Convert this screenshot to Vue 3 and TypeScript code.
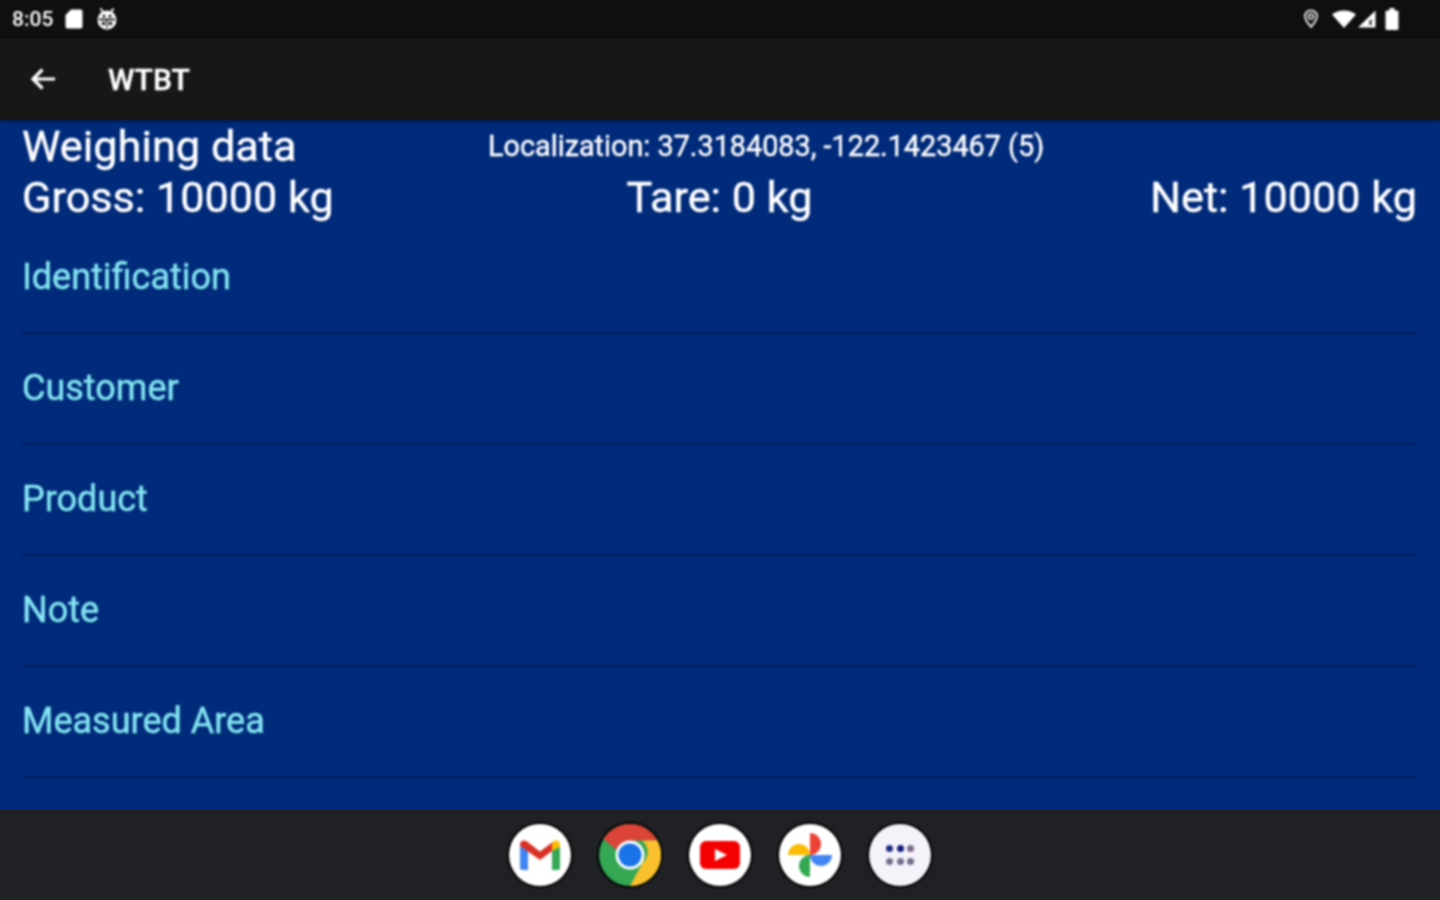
<template>
  <div class="screen">
    <!-- status bar -->
    <div class="status-bar">
      <div class="status-left soft">
        <span class="clock">8:05</span>
        <svg width="18" height="20" viewBox="0 0 18 20"><path d="M6 0.500H15.500a2 2 0 0 1 2 2V17.500a2 2 0 0 1-2 2H2.500a2 2 0 0 1-2-2V6z" fill="#fff" /></svg>
        <svg class="adb" width="22" height="24" viewBox="0 0 22 24">
          <path d="M4.500 1.500L7 5M17.500 1.500L15 5" stroke="#fff" stroke-width="2" fill="none" />
          <circle cx="11" cy="13" r="9.500" fill="#fff" />
          <path d="M3 12.500H19" stroke="#0f0f0f" stroke-width="1.800" />
          <path d="M11 13V21" stroke="#0f0f0f" stroke-width="1.300" />
          <circle cx="8" cy="9" r="1.500" fill="#0f0f0f" />
          <circle cx="14" cy="9" r="1.500" fill="#0f0f0f" />
          <circle cx="7.500" cy="16.500" r="1.800" fill="#0f0f0f" />
          <circle cx="14.500" cy="16.500" r="1.800" fill="#0f0f0f" />
        </svg>
      </div>
      <div class="status-right soft">
        <svg width="18" height="20" viewBox="0 0 18 20">
          <path d="M9 1.500C5.400 1.500 3 4.200 3 7.200C3 11 7 15.500 9 18C11 15.500 15 11 15 7.200C15 4.200 12.600 1.500 9 1.500Z" fill="none" stroke="#ddd" stroke-width="2" />
          <circle cx="9" cy="7.500" r="2.400" fill="none" stroke="#ddd" stroke-width="1.800" />
        </svg>
        <svg class="wifi" width="26" height="20" viewBox="0 0 26 20"><path d="M1 5.500C4.500 2.800 8.500 1.500 13 1.500S21.500 2.800 25 5.500L13 19Z" fill="#fff" /></svg>
        <svg class="signal" width="20" height="20" viewBox="0 0 20 20">
          <path d="M1 18.500L18.500 1.500V18.500Z" fill="#fff" />
          <path d="M14.500 10V16H12.500V12Z" fill="#0f0f0f" />
        </svg>
        <svg class="battery" width="16" height="24" viewBox="0 0 16 24"><path d="M5.500 1H10.500V3.500H13a1.500 1.500 0 0 1 1.500 1.500V21.500A1.500 1.500 0 0 1 13 23H3a1.500 1.500 0 0 1-1.500-1.500V5A1.500 1.500 0 0 1 3 3.500H5.500Z" fill="#fff" /></svg>
      </div>
    </div>

    <!-- app bar -->
    <header class="app-bar">
      <svg class="back soft" width="28" height="28" viewBox="0 0 28 28">
        <path d="M26 14H4M13.500 4.500L4 14L13.500 23.500" fill="none" stroke="#fff" stroke-width="3.200" />
      </svg>
      <h1 class="app-title soft">WTBT</h1>
    </header>

    <main class="content">
      <div class="head-row soft">
        <span class="head-title">Weighing data</span>
        <span class="location">Localization: 37.3184083, -122.1423467 (5)</span>
      </div>
      <div class="weights soft">
        <span v-for="w in weights" :key="w">{{ w }}</span>
      </div>
      <ul class="sections">
        <li v-for="s in sections" :key="s" class="section soft">{{ s }}</li>
      </ul>
    </main>

    <!-- taskbar -->
    <footer class="dock">
      <div class="dock-icon soft">
        <svg width="40" height="30" viewBox="0 0 40 30">
          <path d="M0 6V27.500a2.500 2.500 0 0 0 2.500 2.500H8V10Z" fill="#4285f4" />
          <path d="M40 6V27.500a2.500 2.500 0 0 1-2.500 2.500H32V10Z" fill="#34a853" />
          <path d="M32 3V11L40 7V4.500C40 0.500 35.500 -0.500 33 1.500Z" fill="#fbbc04" />
          <path d="M0 4.500C0 0.500 4.500 -0.500 7 1.500L20 11.500L32 2.500V11L20 20L0 6Z" fill="#d93025" />
        </svg>
      </div>
      <div class="dock-icon chrome soft">
        <svg width="62" height="62" viewBox="0 0 62 62">
          <circle cx="31" cy="31" r="31" fill="#34a853" />
          <path d="M4.500 15A31 31 0 0 1 58.500 16.500H31A14.500 14.500 0 0 0 17.500 26Z" fill="#db4437" />
          <path d="M58.500 16.500A31 31 0 0 1 31 62L43.500 39A14.500 14.500 0 0 0 43 16.500Z" fill="#fbc02d" />
          <circle cx="31" cy="31" r="14.500" fill="#fff" />
          <circle cx="31" cy="31" r="11.500" fill="#1a73e8" />
        </svg>
      </div>
      <div class="dock-icon soft">
        <svg width="40" height="28" viewBox="0 0 40 28">
          <rect width="40" height="28" rx="6" fill="#f40000" />
          <path d="M15 8V20L27 14Z" fill="#fff" />
        </svg>
      </div>
      <div class="dock-icon soft">
        <svg width="46" height="46" viewBox="0 0 46 46">
          <path d="M1 23A11 11 0 0 1 23 23Z" fill="#fbbc04" />
          <path d="M23 1A11 11 0 0 1 23 23Z" fill="#ea4335" />
          <path d="M45 23A11 11 0 0 1 23 23Z" fill="#4285f4" />
          <path d="M23 45A11 11 0 0 1 23 23Z" fill="#34a853" />
        </svg>
      </div>
      <div class="dock-icon apps soft">
        <div class="dots">
          <i v-for="(c, i) in dots" :key="i" :style="{ background: c }"></i>
        </div>
      </div>
    </footer>
  </div>
</template>

<script setup lang="ts">
const weights: string[] = ["Gross: 10000 kg", "Tare: 0 kg", "Net: 10000 kg"]

const sections: string[] = ["Identification", "Customer", "Product", "Note", "Measured Area"]

const dots: string[] = ["#1c2a80", "#101a78", "#7d6a8c", "#6f6f8c", "#6f6f8c", "#6f6f8c"]
</script>

<style>
html,
body {
  margin: 0;
  background: #000;
}
</style>

<style scoped>
.screen {
  width: 1440px;
  height: 900px;
  display: flex;
  flex-direction: column;
  overflow: hidden;
  font-family: Roboto, "Liberation Sans", sans-serif;
}

/* the reference is an upscaled capture, so everything on it is a little soft */
.soft {
  filter: blur(0.9px);
}

.status-bar {
  height: 38px;
  flex: none;
  background: #0f0f0f;
  display: flex;
  align-items: center;
  justify-content: space-between;
  padding: 0 40px 0 12px;
  color: #fff;
}

.status-left,
.status-right {
  display: flex;
  align-items: center;
}

.clock {
  font-size: 21px;
  font-weight: 500;
  width: 53px;
}

.adb {
  margin-left: 13px;
}

.wifi {
  margin-left: 11px;
}

.battery {
  margin-left: 7px;
}

.app-bar {
  height: 82px;
  flex: none;
  background: #171717;
  display: flex;
  align-items: center;
  padding-left: 29px;
  box-shadow: 0 2px 3px rgba(0, 0, 0, 0.4);
  z-index: 1;
}

.app-title {
  margin: 0 0 0 51px;
  font-size: 30px;
  font-weight: 500;
  color: #fff;
  -webkit-text-stroke: 0.4px #fff;
}

.content {
  flex: 1;
  background: #002b7a;
  padding: 0 23px 0 22px;
  color: #fff;
  -webkit-text-stroke: 0.4px currentColor;
}

.head-row {
  height: 52px;
  display: flex;
  align-items: center;
}

.head-title {
  font-size: 43.3px;
  width: 466px;
}

.location {
  font-size: 28.8px;
}

.weights {
  height: 51px;
  display: grid;
  grid-template-columns: 1fr auto 1fr;
  align-items: center;
  font-size: 43.2px;
}

.weights span:last-child {
  justify-self: end;
}

.sections {
  list-style: none;
  margin: 0;
  padding: 0;
}

.section {
  height: 107px;
  padding-bottom: 2px;
  display: flex;
  align-items: center;
  border-bottom: 2px solid #01215e;
  font-size: 36px;
  color: #84e6f2;
}

.dock {
  height: 90px;
  flex: none;
  background: #202124;
  display: flex;
  align-items: center;
  justify-content: center;
  gap: 28px;
}

.dock-icon {
  width: 62px;
  height: 62px;
  border-radius: 50%;
  background: #fff;
  display: flex;
  align-items: center;
  justify-content: center;
  box-shadow: 0 0 0 2px #000;
}

.chrome {
  background: none;
}

.apps {
  background: #f4f3fa;
}

.dots {
  display: grid;
  grid-template-columns: repeat(3, 7px);
  gap: 6px 3.5px;
}

.dots i {
  width: 7px;
  height: 7px;
  border-radius: 50%;
}
</style>
